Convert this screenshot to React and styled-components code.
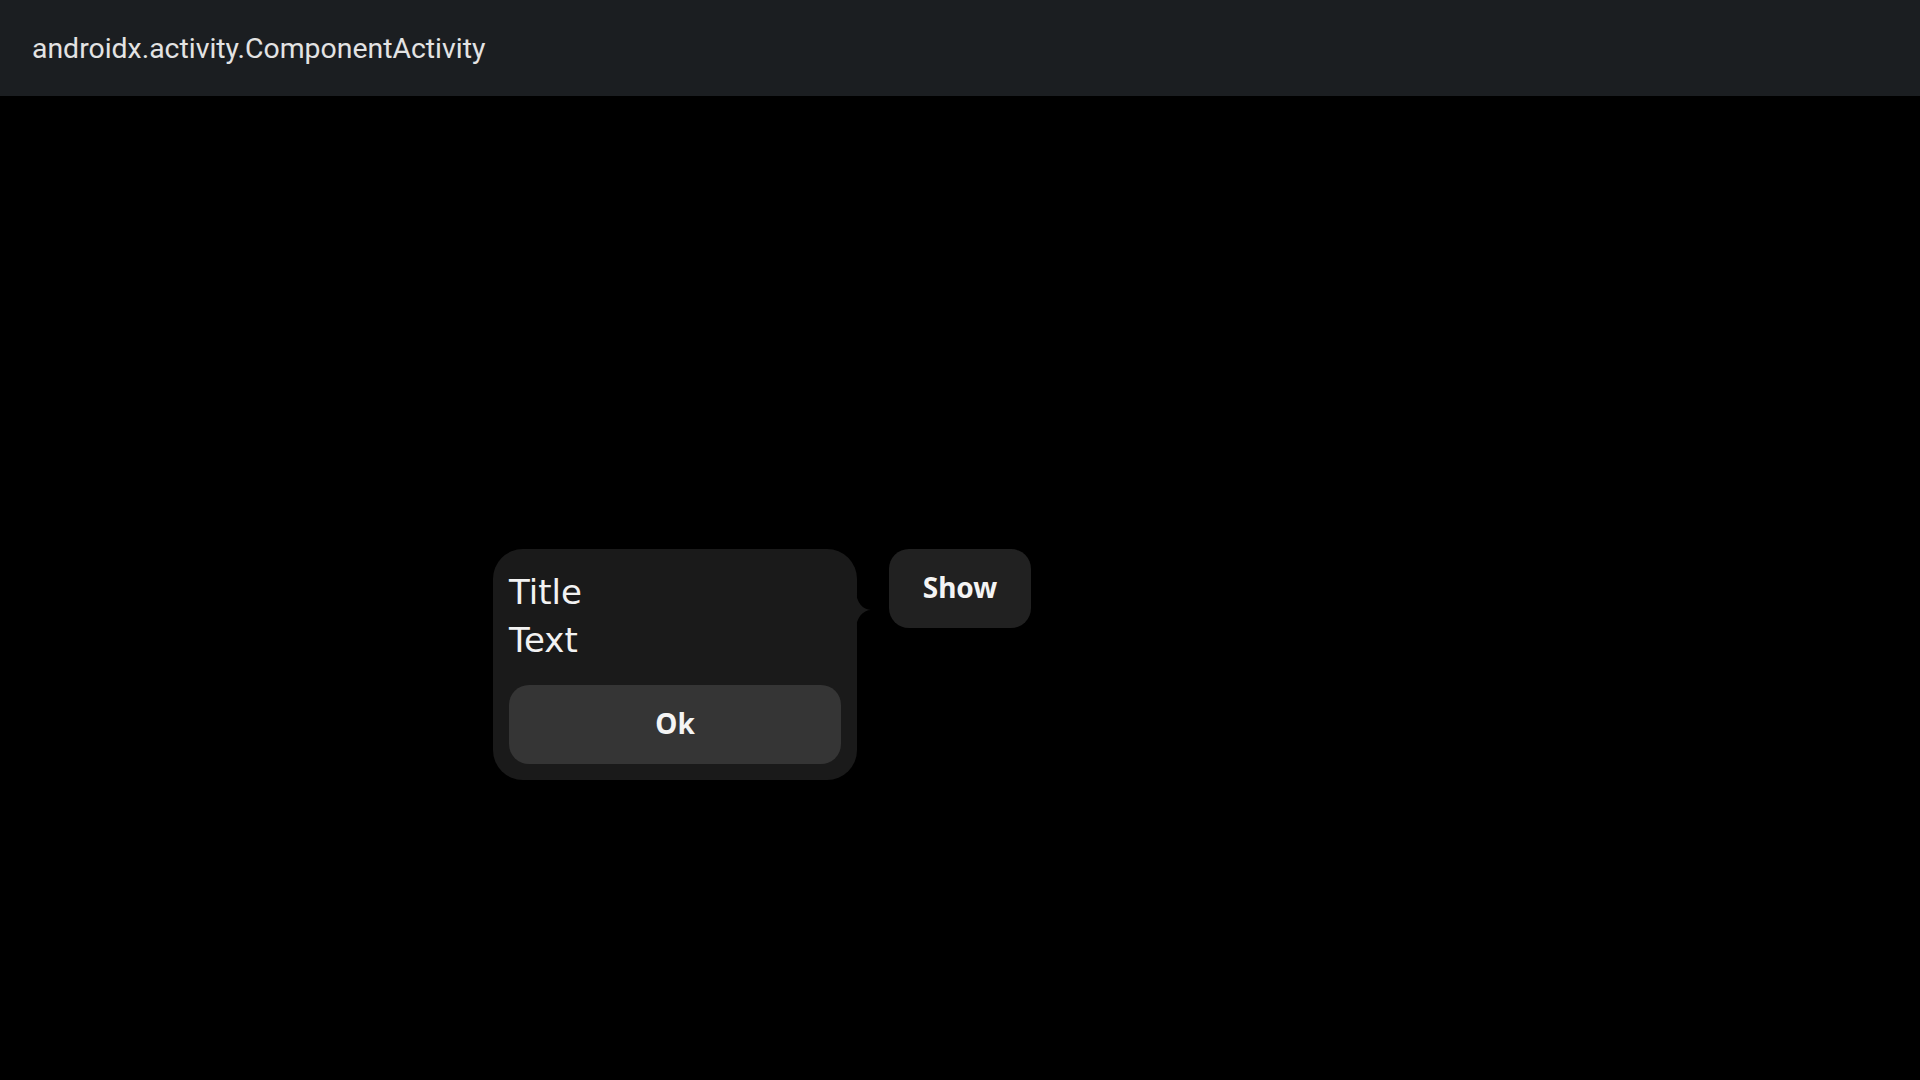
import React from "react"
import styled, { createGlobalStyle } from "styled-components"

const GlobalStyle = createGlobalStyle`
  html, body {
    margin: 0;
    padding: 0;
    background: #000;
  }
  #root {
    min-height: 100vh;
  }
`

const Screen = styled.div`
  display: flex;
  flex-direction: column;
  width: 100vw;
  height: 100vh;
  background: #000;
  overflow: hidden;
`

const TitleBar = styled.header`
  flex: 0 0 96px;
  display: flex;
  align-items: center;
  padding: 0 0 0 32px;
  background: #1b1e21;
  color: #e3e3e3;
  font-family: Roboto, "Liberation Sans", sans-serif;
  font-size: 28.4px;
  box-sizing: border-box;
`

const Content = styled.main`
  flex: 1;
  display: flex;
  align-items: center;
  justify-content: center;
`

const Anchor = styled.div`
  position: relative;
`

const ShowButton = styled.button`
  width: 142px;
  height: 79px;
  border: none;
  border-radius: 20px;
  background: #212121;
  color: #f4f4f4;
  font-family: "Noto Sans", "Open Sans", sans-serif;
  font-weight: 700;
  font-size: 28px;
  cursor: pointer;
  padding: 0 0 2px;
`

const Popup = styled.div`
  position: absolute;
  top: 0;
  right: calc(100% + 32px);
  width: 364px;
  box-sizing: border-box;
  padding: 19px 16px 16px;
  border-radius: 30px;
  background: #1a1a1a;
  color: #f2f2f2;
`

const Tail = styled.svg`
  position: absolute;
  left: 100%;
  top: 42px;
  margin-left: -1px;
  overflow: visible;
`

const Line = styled.div`
  font-family: "DejaVu Sans", "Noto Sans", sans-serif;
  font-size: 34px;
  line-height: 48px;
`

const OkButton = styled.button`
  display: block;
  width: 100%;
  height: 79px;
  margin-top: 21px;
  border: none;
  border-radius: 20px;
  background: #353535;
  color: #f4f4f4;
  font-family: "Noto Sans", "Open Sans", sans-serif;
  font-weight: 700;
  font-size: 28px;
  padding: 0 0 2px;
  cursor: pointer;
`

export default function App() {
  return (
    <Screen>
      <GlobalStyle />
      <TitleBar>androidx.activity.ComponentActivity</TitleBar>
      <Content>
        <Anchor>
          <Popup>
            <Tail width="16" height="38" viewBox="0 0 16 38">
              <path d="M0 0 A15 19 0 0 0 15 19 A15 19 0 0 0 0 38 Z" fill="#1a1a1a" />
            </Tail>
            <Line>Title</Line>
            <Line>Text</Line>
            <OkButton>Ok</OkButton>
          </Popup>
          <ShowButton>Show</ShowButton>
        </Anchor>
      </Content>
    </Screen>
  )
}
